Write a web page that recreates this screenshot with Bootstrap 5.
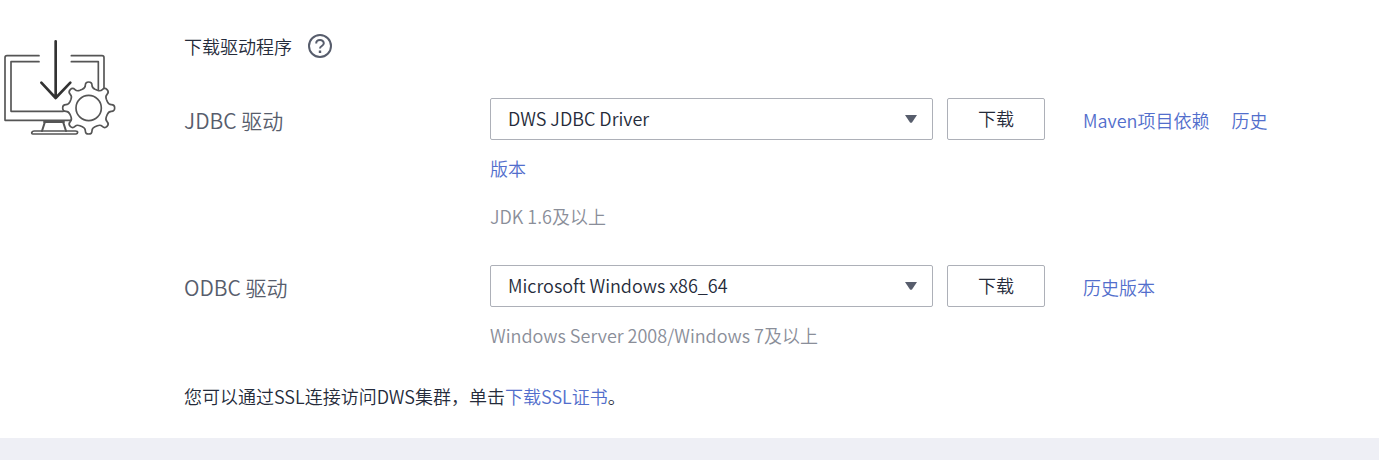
<!DOCTYPE html>
<html lang="zh-CN">
<head>
<meta charset="utf-8">
<meta name="viewport" content="width=device-width, initial-scale=1">
<title>下载驱动程序</title>
<link href="https://cdn.jsdelivr.net/npm/bootstrap@5.3.0/dist/css/bootstrap.min.css" rel="stylesheet">
<style>
body{font-family:"Noto Sans CJK SC",sans-serif;font-size:18px;font-weight:350;line-height:24px;color:#252b3a;background:#fff}
a{color:#526ecc;text-decoration:none}
a:hover{text-decoration:underline}
.panel{padding:30px 0;border-bottom:22px solid #eeeff5}
.art{width:184px}
.art svg{width:120px;height:110px;display:block}
.panel-title{font-size:18px;font-weight:350;line-height:32px}
.help{width:26px;height:26px;margin-left:15px;border:0;padding:0;background:none}
.help svg{display:block}
.drivers{gap:23px;margin:34px 0 25px}
.driver{padding-right:96px}
.driver-label{width:306px;font-size:21px;line-height:48px;color:#575d6c}
.driver-body{line-height:48px}
.pick,.get{display:inline-block;height:42px;border:1px solid #adb0b8;border-radius:2px;font-size:18px;font-weight:350;line-height:24px;color:#252b3a;vertical-align:2px}
.pick{width:443px;max-width:100%;padding:0 40px 2px 17px;margin-right:14px;background-image:url("data:image/svg+xml,%3Csvg xmlns='http://www.w3.org/2000/svg' viewBox='0 0 12 8'%3E%3Cpath d='M0 0h12L7 7.500Q6 8 5 7.500z' fill='%23575d6c'/%3E%3C/svg%3E");background-size:12px 8px;background-position:right 15px center}
.get{width:98px;padding:0 0 2px;margin-right:38px}
.more{margin-right:18px}
.hint{color:#8a8e99}
</style>
</head>
<body>
<main class="panel d-flex">
  <div class="art flex-shrink-0">
    <svg viewBox="0 0 360 330" fill="none" stroke="#555" stroke-width="5" stroke-linecap="round" stroke-linejoin="round" aria-hidden="true">
      <path d="M117 77H21q-6 0-6 6V271H214M214 77h92q6 0 6 6V180M117 95H33V244H190M214 95h81v84"/>
      <path d="M135 275 126 303M189 275l9 28M132 276h60" stroke-width="6"/>
      <path d="M103 303H226q7 0 7 4t-5 5H98q-3 0-3-3 1-6 8-6z"/>
      <path d="M167 34V203M124 158l43 46 44-46" stroke="#333" stroke-width="8"/>
      <path id="gear" fill="#fff"/>
      <circle cx="266" cy="234" r="38"/>
    </svg>
  </div>
  <div class="flex-grow-1">
    <div class="d-flex align-items-center">
      <h1 class="panel-title mb-0">下载驱动程序</h1>
      <button class="help" type="button" aria-label="帮助">
        <svg width="26" height="26" viewBox="0 0 26 26" fill="none" stroke="#575d6c" stroke-width="2"><circle cx="13" cy="13" r="11"/><path d="M9.200 10.500C9.200 6 16.800 6 16.800 10.300c0 2.800-3.800 2.600-3.800 5.200"/><path d="M13 17.500v2.500" stroke-width="2.400"/></svg>
      </button>
    </div>
    <form class="drivers d-flex flex-column">
      <div class="driver d-flex">
        <label class="driver-label flex-shrink-0" for="jdbc">JDBC 驱动</label>
        <div class="driver-body">
          <div><select class="form-select pick" id="jdbc"><option>DWS JDBC Driver</option></select><button type="button" class="get btn">下载</button><a class="more" href="#maven">Maven项目依赖</a> <a href="#history">历史版本</a></div>
          <div class="hint">JDK 1.6及以上</div>
        </div>
      </div>
      <div class="driver d-flex">
        <label class="driver-label flex-shrink-0" for="odbc">ODBC 驱动</label>
        <div class="driver-body">
          <div><select class="form-select pick" id="odbc"><option>Microsoft Windows x86_64</option></select><button type="button" class="get btn">下载</button><a href="#odbc-history">历史版本</a></div>
          <div class="hint">Windows Server 2008/Windows 7及以上</div>
        </div>
      </div>
    </form>
    <p class="mb-0">您可以通过SSL连接访问DWS集群，单击<a href="#ssl">下载SSL证书</a>。</p>
  </div>
</main>
<script src="https://cdn.jsdelivr.net/npm/bootstrap@5.3.0/dist/js/bootstrap.bundle.min.js"></script>
<script>
// Eight rounded teeth around the gear hub.
let d = "";
for (let i = 0; i < 8; i++) {
  const a = i * Math.PI / 4;
  const p = (r, w) => (266 + r * Math.cos(a) - w * Math.sin(a)).toFixed(1) + " " + (234 + r * Math.sin(a) + w * Math.cos(a)).toFixed(1);
  d += (i ? "L" : "M") + p(56, -19) + "Q" + p(60, -10) + " " + p(68, -10) + "Q" + p(78, -10) + " " + p(78, 0) + "Q" + p(78, 10) + " " + p(68, 10) + "Q" + p(60, 10) + " " + p(56, 19);
}
document.getElementById("gear").setAttribute("d", d + "Z");
</script>
</body>
</html>
